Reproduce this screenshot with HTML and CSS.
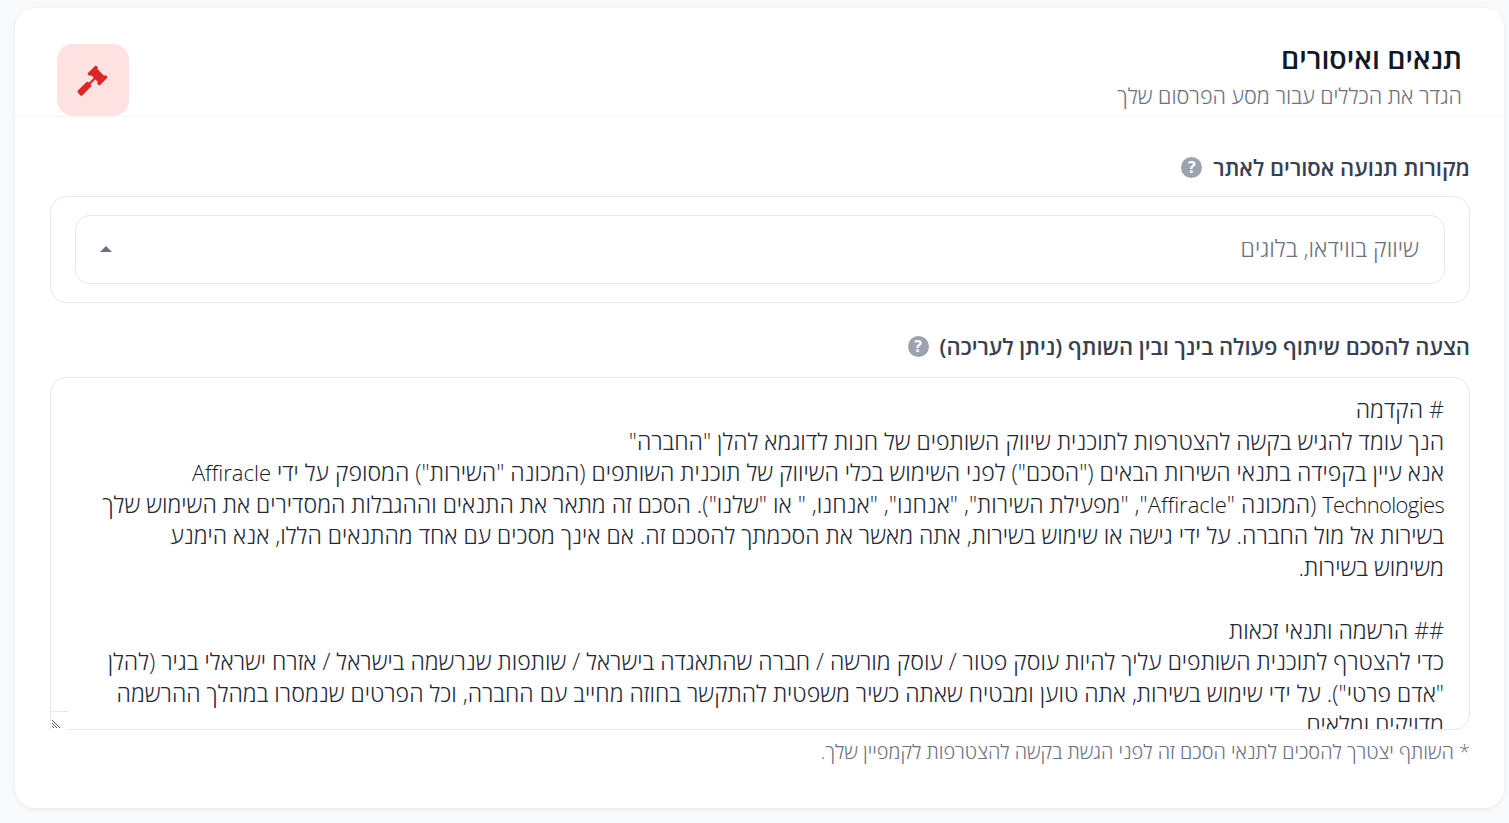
FILE: index.html
```html
<!doctype html>
<html lang="he" dir="rtl">
<head>
<meta charset="utf-8">
<title>תנאים ואיסורים</title>
<link rel="stylesheet" href="styles.css">
</head>
<body>
<div class="card">
	<div class="card-head">
		<div class="head-text">
			<h2>תנאים ואיסורים</h2>
			<p>הגדר את הכללים עבור מסע הפרסום שלך</p>
		</div>
		<div class="head-icon">
			<svg width="44" height="44" viewBox="0 0 44 44"><g fill="#dc2626" transform="rotate(45 22 22)"><rect x="13.5" y="9.6" width="3.6" height="12" rx="1"/><rect x="27" y="9.6" width="3.6" height="12" rx="1"/><rect x="16" y="11.2" width="12" height="8.8"/><rect x="21" y="19" width="2.2" height="9"/><rect x="18.8" y="26.7" width="6.5" height="15" rx="1.6"/></g></svg>
		</div>
	</div>
	<div class="card-body">
		<div class="field-label">מקורות תנועה אסורים לאתר <span class="help">?</span></div>
		<div class="select-box">
			<div class="select-inner">
				<span class="select-value">שיווק בווידאו, בלוגים</span>
				<i class="caret"></i>
			</div>
		</div>
		<div class="field-label second">הצעה להסכם שיתוף פעולה בינך ובין השותף (ניתן לעריכה) <span class="help">?</span></div>
		<div class="terms-wrap">
			<div class="terms"># הקדמה
הנך עומד להגיש בקשה להצטרפות לתוכנית שיווק השותפים של חנות לדוגמא להלן "החברה"
אנא עיין בקפידה בתנאי השירות הבאים ("הסכם") לפני השימוש בכלי השיווק של תוכנית השותפים (המכונה "השירות") המסופק על ידי <span class="lat">Affiracle</span> <span class="lat tight">Technologies</span> (המכונה "<span class="lat">Affiracle</span>", "מפעילת השירות", "אנחנו", "אנחנו, " או "שלנו"). הסכם זה מתאר את התנאים וההגבלות המסדירים את השימוש שלך בשירות אל מול החברה. על ידי גישה או שימוש בשירות, אתה מאשר את הסכמתך להסכם זה. אם אינך מסכים עם אחד מהתנאים הללו, אנא הימנע משימוש בשירות.

## הרשמה ותנאי זכאות
כדי להצטרף לתוכנית השותפים עליך להיות עוסק פטור / עוסק מורשה / חברה שהתאגדה בישראל / שותפות שנרשמה בישראל / אזרח ישראלי בגיר (להלן "אדם פרטי"). על ידי שימוש בשירות, אתה טוען ומבטיח שאתה כשיר משפטית להתקשר בחוזה מחייב עם החברה, וכל הפרטים שנמסרו במהלך ההרשמה מדויקים ומלאים.</div>
			<span class="corner"><svg width="9" height="9" viewBox="0 0 9 9"><path d="M0 1L8 9M0 4L5 9M0 7L2 9" stroke="#555" stroke-width="1" fill="none"/></svg></span>
		</div>
		<p class="note">* השותף יצטרך להסכים לתנאי הסכם זה לפני הגשת בקשה להצטרפות לקמפיין שלך.</p>
	</div>
</div>
</body>
</html>
```
FILE: styles.css
```css
*{box-sizing:border-box;}
html,body{margin:0;padding:0;}
body{background:#f9fafb;font-family:"Open Sans","Liberation Sans",sans-serif;height:823px;overflow:hidden;padding:8px 5px 0 15px;}
h2,p{margin:0;}

.card{height:800px;background:#fff;border-radius:20px;box-shadow:0 1px 4px rgba(0,0,0,.08);}
.card-head{height:109px;display:flex;justify-content:space-between;align-items:flex-start;padding:36px 42px 0;border-bottom:1px solid #f3f4f6;}
.head-text h2{font-size:28.5px;line-height:28px;font-weight:600;color:#111827;}
.head-text p{font-size:21.6px;line-height:28px;margin-top:10px;font-weight:300;color:#6b7280;}
.head-icon{width:72px;height:72px;background:#fee2e2;border-radius:16px;display:flex;align-items:center;justify-content:center;}

.card-body{padding:35px 34px 0 35px;}
.field-label{display:flex;align-items:center;gap:11px;font-size:22px;line-height:30px;font-weight:600;color:#374151;}
.field-label.second{margin-top:28px;}
.help{width:21px;height:21px;border-radius:50%;background:#9ca3af;color:#fff;font-size:16px;line-height:21px;font-weight:700;text-align:center;}

.select-box{margin-top:14px;height:107px;border:1px solid #e5e7eb;border-radius:16px;padding:18px 24px;}
.select-inner{height:69px;border:1px solid #e5e7eb;border-radius:14px;padding:0 25px 0 24px;display:flex;justify-content:space-between;align-items:center;}
.select-value{font-size:23.3px;font-weight:300;color:#6b7280;padding-bottom:4px;}
.caret{width:0;height:0;border:6px solid transparent;border-top:0;border-bottom:6px solid #6b7280;margin-bottom:2px;}

.terms-wrap{position:relative;margin-top:16px;}
.terms{height:353px;padding:16px 25px 16px 44px;border:1px solid #e5e7eb;border-radius:16px;font-size:23.1px;line-height:31.5px;font-weight:300;color:#1f2937;overflow:hidden;white-space:pre-wrap;}
.lat{font-size:22px;color:#111827;}
.lat.tight{letter-spacing:-.65px;}
.corner{position:absolute;left:0;bottom:0;width:18px;height:19px;background:#fff;border-top:1px solid #e5e7eb;border-left:1px solid #e5e7eb;padding:7px 0 0 1px;direction:ltr;}
.corner svg{display:block;}
.note{margin-top:9px;font-size:19.9px;line-height:26px;font-weight:300;color:#6b7280;}
```
